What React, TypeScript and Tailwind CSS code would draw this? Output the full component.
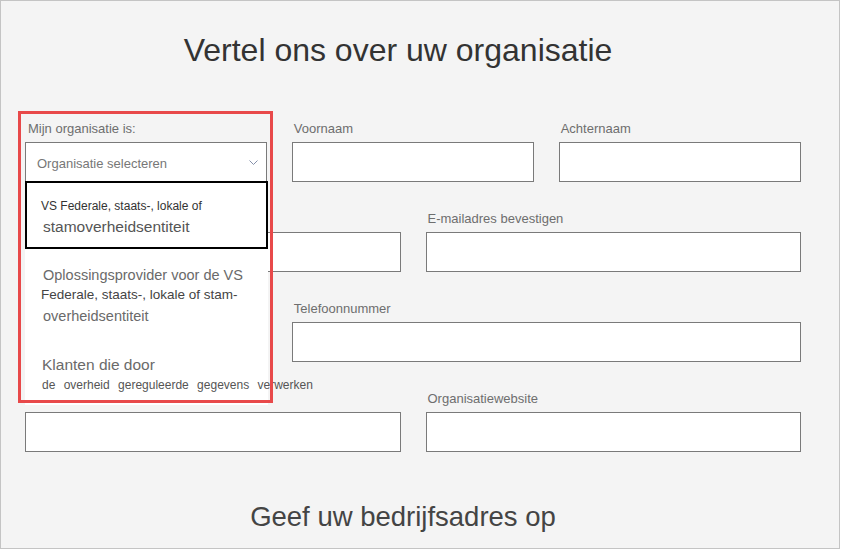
import React from "react";

interface IField {
  label?: string;
  className?: string;
}

function Field(props: IField) {
  return (
    <div className={props.className}>
      <div className="h-[16px] leading-[16px] pt-[1px] text-[13px] text-[#6e6e6e] pl-[2px] whitespace-nowrap">
        {props.label ?? ""}
      </div>
      <div className="mt-[6px] h-[40px] bg-white border border-[#7a7a7a]"></div>
    </div>
  );
}

function OrgSelect() {
  return (
    <div className="relative">
      <div className="h-[16px] leading-[16px] pt-[1px] text-[13px] text-[#6e6e6e] pl-[3px] whitespace-nowrap">
        Mijn organisatie is:
      </div>
      <div className="mt-[6px] h-[40px] bg-white border border-[#7a7a7a] flex items-center justify-between pl-[11px] pr-[8px]">
        <span className="text-[13px] text-[#777] pt-[3px]">Organisatie selecteren</span>
        <svg width="9" height="6" viewBox="0 0 9 6" className="mt-[1px]">
          <polyline points="0.5,0.5 4.5,4.5 8.5,0.5" fill="none" stroke="#8590aa" strokeWidth="1" />
        </svg>
      </div>

      {/* open dropdown list */}
      <div className="absolute left-0 top-[61px] w-[243px] h-[224px] bg-white z-10">
        <div className="h-[68px] border-2 border-black pt-[14px] pl-[14px]">
          <div className="text-[12px] leading-[18px] text-[#333]">VS Federale, staats-, lokale of</div>
          <div className="text-[15.5px] leading-[22px] text-[#555] ml-[2px] mt-[1px]">stamoverheidsentiteit</div>
        </div>
        <div className="pt-[16px] pl-[16px]">
          <div className="text-[14.5px] leading-[20px] text-[#6a6a6a] ml-[2px]">Oplossingsprovider voor de VS</div>
          <div className="text-[13.5px] leading-[20px] text-[#444]">Federale, staats-, lokale of stam-</div>
          <div className="text-[14.5px] leading-[22px] text-[#6a6a6a] ml-[2px]">overheidsentiteit</div>
        </div>
        <div className="pt-[27px] pl-[17px]">
          <div className="text-[15.5px] leading-[22px] text-[#6a6a6a]">Klanten die door</div>
          <div className="text-[12px] leading-[18px] text-[#555] whitespace-nowrap [word-spacing:5px]">
            de overheid gereguleerde gegevens verwerken
          </div>
        </div>
      </div>

      {/* highlight frame */}
      <div className="absolute left-[-7px] top-[-9px] w-[255px] h-[292px] border-[3px] border-[#e8494a] z-20 pointer-events-none"></div>
    </div>
  );
}

export default function App() {
  return (
    <div className="w-[841px] h-[549px] bg-white font-['Liberation_Sans',Arial,sans-serif]">
      <div className="w-[840px] h-[549px] bg-[#f4f4f4] border border-[#c4c4c4] overflow-hidden">
        <div className="pt-[29px] h-[119px]">
          <h1 className="text-center pr-[44px] text-[32px] leading-[40px] text-[#333]">
            Vertel ons over uw organisatie
          </h1>
        </div>

        <div className="pl-[24px] w-[800px] flex flex-col gap-[28px]">
          <div className="grid grid-cols-3 gap-x-[24.5px]">
            <OrgSelect />
            <Field label="Voornaam" />
            <Field label="Achternaam" />
          </div>
          <div className="grid grid-cols-2 gap-x-[25px]">
            <Field label="" />
            <Field label="E-mailadres bevestigen" />
          </div>
          <div className="grid grid-cols-3 gap-x-[24.5px]">
            <Field label="" />
            <Field label="Telefoonnummer" className="col-span-2" />
          </div>
          <div className="grid grid-cols-2 gap-x-[25px]">
            <Field label="" />
            <Field label="Organisatiewebsite" />
          </div>
        </div>

        <h2 className="mt-[48px] text-center pr-[34px] text-[27.5px] leading-[34px] text-[#444]">
          Geef uw bedrijfsadres op
        </h2>
      </div>
    </div>
  );
}
